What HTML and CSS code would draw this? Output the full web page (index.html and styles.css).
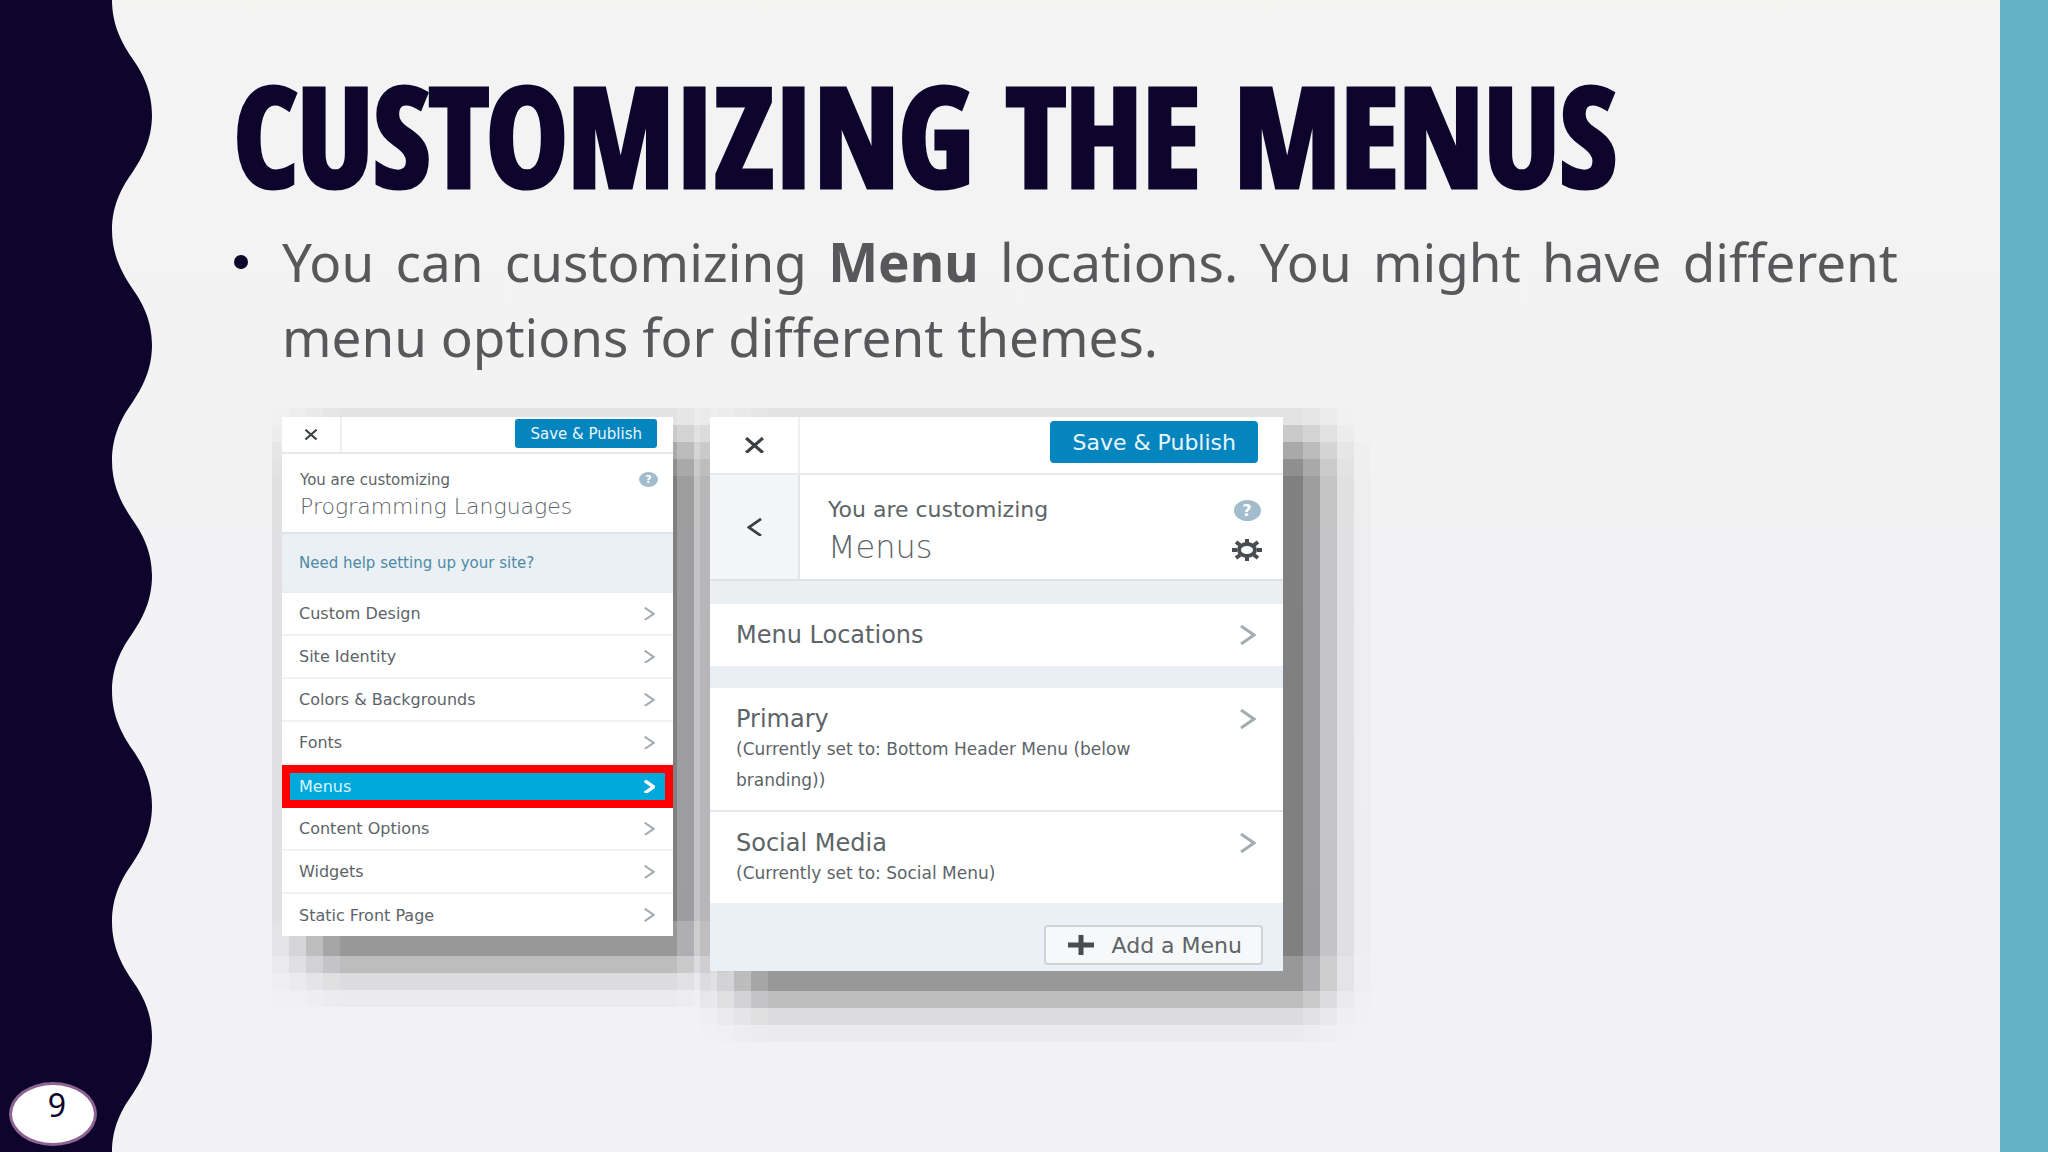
FILE: index.html
```html
<!DOCTYPE html>
<html lang="en">
<head>
  <meta charset="UTF-8">
  <meta name="viewport" content="width=device-width, initial-scale=1.0">
  <title>Customizing the Menus</title>
  <link rel="stylesheet" href="styles.css">
</head>
<body>

  <aside class="wave">
    <svg class="wave-shape" viewBox="0 0 152 1152" preserveAspectRatio="none" aria-hidden="true">
      <path d="M0 0H112
        C112 25 122 43 132 58C142 72 152 90 152 115C152 140 142 158 132 173C122 187 112 205 112 230
        C112 255 122 273 132 288C142 302 152 320 152 345C152 370 142 388 132 403C122 417 112 435 112 461
        C112 486 122 504 132 519C142 533 152 551 152 576C152 601 142 619 132 634C122 648 112 666 112 691
        C112 716 122 734 132 749C142 763 152 781 152 806C152 831 142 849 132 864C122 878 112 896 112 922
        C112 947 122 965 132 980C142 994 152 1012 152 1037C152 1062 142 1080 132 1095C122 1109 112 1127 112 1152H0Z"/>
    </svg>
    <span class="page-number">9</span>
  </aside>

  <main class="slide">
    <h1>CUSTOMIZING THE MENUS</h1>

    <ul class="points">
      <li>You can customizing <strong>Menu</strong> locations. You might have different menu options for different themes.</li>
    </ul>

    <div class="panels">
      <section class="panel panel-small">
        <div class="topbar">
          <button class="close" aria-label="Close"><svg viewBox="0 0 20 16"><path d="M2 1L18 15M18 1L2 15"/></svg></button>
          <button class="save">Save &amp; Publish</button>
        </div>
        <div class="heading">
          <div class="heading-text">
            <p>You are customizing</p>
            <h2>Programming Languages</h2>
          </div>
          <div class="tools">
            <button class="help" aria-label="Help">?</button>
          </div>
        </div>
        <a class="need-help" href="#">Need help setting up your site?</a>
        <ul class="rows">
          <li><a href="#">Custom Design <svg class="chevron" viewBox="0 0 16 20"><path d="M1 1L14 10L1 19"/></svg></a></li>
          <li><a href="#">Site Identity <svg class="chevron" viewBox="0 0 16 20"><path d="M1 1L14 10L1 19"/></svg></a></li>
          <li><a href="#">Colors &amp; Backgrounds <svg class="chevron" viewBox="0 0 16 20"><path d="M1 1L14 10L1 19"/></svg></a></li>
          <li><a href="#">Fonts <svg class="chevron" viewBox="0 0 16 20"><path d="M1 1L14 10L1 19"/></svg></a></li>
          <li class="active"><a href="#">Menus <svg class="chevron" viewBox="0 0 16 20"><path d="M1 1L14 10L1 19"/></svg></a></li>
          <li><a href="#">Content Options <svg class="chevron" viewBox="0 0 16 20"><path d="M1 1L14 10L1 19"/></svg></a></li>
          <li><a href="#">Widgets <svg class="chevron" viewBox="0 0 16 20"><path d="M1 1L14 10L1 19"/></svg></a></li>
          <li><a href="#">Static Front Page <svg class="chevron" viewBox="0 0 16 20"><path d="M1 1L14 10L1 19"/></svg></a></li>
        </ul>
      </section>

      <section class="panel panel-large">
        <div class="topbar">
          <button class="close" aria-label="Close"><svg viewBox="0 0 20 16"><path d="M2 1L18 15M18 1L2 15"/></svg></button>
          <button class="save">Save &amp; Publish</button>
        </div>
        <div class="heading">
          <button class="back" aria-label="Back"><svg viewBox="0 0 16 20"><path d="M15 1L2 10L15 19"/></svg></button>
          <div class="heading-text">
            <p>You are customizing</p>
            <h2>Menus</h2>
          </div>
          <div class="tools">
            <button class="help" aria-label="Help">?</button>
            <button class="gear" aria-label="Settings">
              <svg viewBox="-15 -11 30 22">
                <ellipse rx="8" ry="6"/>
                <path d="M0 -7V-11M0 7V11M-10 0H-15M10 0H15M-7 -5L-11 -8M7 -5L11 -8M-7 5L-11 8M7 5L11 8"/>
              </svg>
            </button>
          </div>
        </div>
        <ul class="locations">
          <li><a href="#"><span>Menu Locations</span> <svg class="chevron" viewBox="0 0 16 20"><path d="M1 1L14 10L1 19"/></svg></a></li>
        </ul>
        <ul class="menus">
          <li><a href="#"><span>Primary <small>(Currently set to: Bottom Header Menu (below branding))</small></span> <svg class="chevron" viewBox="0 0 16 20"><path d="M1 1L14 10L1 19"/></svg></a></li>
          <li><a href="#"><span>Social Media <small>(Currently set to: Social Menu)</small></span> <svg class="chevron" viewBox="0 0 16 20"><path d="M1 1L14 10L1 19"/></svg></a></li>
        </ul>
        <div class="footer">
          <button class="add"><svg viewBox="0 0 26 20"><path d="M0 10H26M13 0V20"/></svg>Add a Menu</button>
        </div>
      </section>
    </div>
  </main>

  <div class="stripe"></div>

</body>
</html>
```
FILE: styles.css
```css
* {
  box-sizing: border-box;
}

body {
  margin: 0;
  min-height: 100vh;
  display: flex;
  font-family: "Noto Sans", "Open Sans", sans-serif;
  background: linear-gradient(#f3f4f2, #f3f3f4 10%, #f2f1f4);
}

h1, h2, p, ul {
  margin: 0;
  padding: 0;
}

ul {
  list-style: none;
}

a {
  color: inherit;
  text-decoration: none;
}

button {
  border: none;
  padding: 0;
  background: none;
  font: inherit;
  cursor: pointer;
}

svg {
  display: block;
  fill: none;
  stroke: currentColor;
  stroke-width: 3;
}

/* side decoration */
.wave {
  position: relative;
  flex: none;
  width: 152px;
}

.wave-shape {
  position: absolute;
  width: 100%;
  height: 100%;
  fill: #0d052b;
  stroke: none;
}

.page-number {
  position: absolute;
  left: 9px;
  bottom: 6px;
  width: 88px;
  height: 64px;
  padding-left: 8px;
  border: 3px solid #8d6392;
  border-radius: 50%;
  background: white;
  color: #0d052b;
  font-size: 32px;
  line-height: 40px;
  text-align: center;
}

.stripe {
  flex: none;
  width: 48px;
  background-color: #64b2c5;
}

/* slide */
.slide {
  flex: 1;
  padding: 46px 102px 0 82px;
}

h1 {
  color: #0d052b;
  font-family: Impact, "Open Sans Condensed", "Liberation Sans Narrow", sans-serif;
  font-size: 136px;
  font-weight: bold;
  line-height: 178px;
  white-space: nowrap;
  -webkit-text-stroke: 5px #0d052b;
}

.points li {
  position: relative;
  padding-left: 48px;
  color: #58585a;
  font-size: 53px;
  line-height: 75px;
  text-align: justify;
}

.points li::before {
  content: "";
  position: absolute;
  left: 0;
  top: 31px;
  width: 14px;
  height: 14px;
  border-radius: 50%;
  background-color: #0d052b;
}

.panels {
  display: flex;
  align-items: flex-start;
  gap: 37px;
  padding: 43px 0 0 48px;
  isolation: isolate;
}

/* customizer panels */
.panel {
  position: relative;
  background-color: white;
  color: #5d6468;
  font-family: "DejaVu Sans", sans-serif;
}

/* stepped drop shadow: the gradient fades sideways, the mask fades up and down */
.panel::before {
  content: "";
  position: absolute;
  z-index: -1;
  inset: -9px -88px -71px -10px;
  background: linear-gradient(to right,
    rgba(0, 0, 0, 0.07) 17px,
    rgba(0, 0, 0, 0.15) 17px 34px,
    rgba(0, 0, 0, 0.28) 34px 51px,
    rgba(0, 0, 0, 0.4) 51px 68px,
    rgba(0, 0, 0, 0.47) 68px calc(100% - 68px),
    rgba(0, 0, 0, 0.35) 0 calc(100% - 51px),
    rgba(0, 0, 0, 0.19) 0 calc(100% - 34px),
    rgba(0, 0, 0, 0.07) 0 calc(100% - 17px),
    rgba(0, 0, 0, 0.015) 0);
  mask-image: linear-gradient(to bottom,
    rgba(0, 0, 0, 0.13) 17px,
    rgba(0, 0, 0, 0.36) 17px 34px,
    rgba(0, 0, 0, 0.64) 34px 51px,
    rgba(0, 0, 0, 0.87) 51px 68px,
    black 68px calc(100% - 86px),
    rgba(0, 0, 0, 0.79) 0 calc(100% - 51px),
    rgba(0, 0, 0, 0.47) 0 calc(100% - 34px),
    rgba(0, 0, 0, 0.19) 0 calc(100% - 17px),
    rgba(0, 0, 0, 0.06) 0);
}

.panel-small {
  width: 391px;
  font-size: 16px;
}

.panel-small::before {
  right: -72px;
}

.panel-large {
  width: 573px;
  font-size: 24px;
}

.topbar {
  display: flex;
  align-items: flex-start;
  justify-content: space-between;
  height: 37px;
  padding-right: 16px;
  border-bottom: 2px solid #e6e8ea;
}

.close {
  width: 60px;
  height: 100%;
  border-right: 2px solid #edeff1;
  color: #3c4043;
}

.close svg {
  width: 14px;
  margin: 0 auto;
}

.save {
  height: 29px;
  margin-top: 2px;
  padding: 0 15px;
  border-radius: 3px;
  background-color: #0585be;
  color: #e8f6fc;
  font-size: 15px;
}

.heading {
  display: flex;
  height: 80px;
  border-bottom: 2px solid #dfe3e7;
}

.heading-text {
  flex: 1;
  padding: 14px 0 0 18px;
}

.heading p {
  font-size: 15px;
  line-height: 24px;
}

.heading h2 {
  font-size: 22px;
  font-weight: 200;
  line-height: 30px;
  white-space: nowrap;
}

.tools {
  padding: 18px 15px 0 0;
}

.help {
  display: block;
  width: 19px;
  height: 15px;
  border-radius: 50%;
  background-color: #a3bccd;
  color: white;
  font-size: 11px;
  font-weight: bold;
  line-height: 15px;
}

.need-help {
  display: block;
  height: 59px;
  padding-left: 17px;
  border-bottom: 2px solid #e9edf0;
  background-color: #ebf0f5;
  color: #4c8ba6;
  font-size: 15px;
  line-height: 59px;
}

.rows a {
  display: flex;
  align-items: center;
  justify-content: space-between;
  height: 43px;
  padding: 0 18px 0 17px;
  border-bottom: 2px solid #f1f2f3;
}

.rows .chevron {
  width: 11px;
}

.rows li:last-child a {
  height: 42px;
  border-bottom: none;
}

.rows .active a {
  padding: 0 10px 0 9px;
  border: 8px solid #ff0000;
  background-color: #00a9dc;
  color: #d9f6ff;
}

.chevron {
  flex: none;
  width: 16px;
  color: #a5acb0;
}

.active .chevron {
  color: white;
  stroke-width: 5;
}

.panel-large .topbar {
  height: 58px;
  padding-right: 25px;
}

.panel-large .close {
  width: 90px;
}

.panel-large .close svg {
  width: 21px;
}

.panel-large .save {
  height: 42px;
  margin-top: 4px;
  padding: 0 22px;
  border-radius: 4px;
  font-size: 22px;
}

.panel-large .heading {
  height: 106px;
}

.back {
  width: 90px;
  border-right: 2px solid #e3e6e9;
  background-color: #f3f5f7;
  color: #3c4043;
}

.back svg {
  width: 15px;
  margin: 0 auto;
}

.panel-large .heading-text {
  padding: 17px 0 0 28px;
}

.panel-large .heading p {
  font-size: 22px;
  line-height: 36px;
}

.panel-large .heading h2 {
  font-size: 32px;
  line-height: 38px;
}

.panel-large .tools {
  padding: 25px 21px 0 0;
}

.panel-large .help {
  width: 27px;
  height: 21px;
  margin: 0 auto 18px;
  font-size: 16px;
  line-height: 21px;
}

.gear {
  display: block;
  color: #484c50;
}

.gear svg {
  width: 30px;
  stroke-width: 4;
}

.locations {
  border-top: 23px solid #ebeff2;
  border-bottom: 22px solid #e8eef4;
}

.locations a,
.menus a {
  display: flex;
  align-items: flex-start;
  justify-content: space-between;
  padding: 16px 27px 16px 26px;
  line-height: 30px;
}

.locations .chevron,
.menus .chevron {
  margin-top: 5px;
}

.menus a {
  padding: 16px 27px 14px 26px;
}

.menus li + li {
  border-top: 2px solid #e6e7ea;
}

.menus span {
  max-width: 440px;
}

small {
  display: block;
  font-size: 17px;
  line-height: 31px;
}

.footer {
  display: flex;
  justify-content: flex-end;
  padding: 22px 20px 6px;
  background-color: #ebeff6;
}

.add {
  display: flex;
  align-items: center;
  gap: 18px;
  height: 40px;
  padding: 0 19px 0 22px;
  border: 2px solid #cfd3d6;
  border-radius: 4px;
  background-color: #f7f8f9;
  color: #5d6468;
  font-size: 22px;
}

.add svg {
  width: 26px;
  color: #484c50;
  stroke-width: 5;
}
```
